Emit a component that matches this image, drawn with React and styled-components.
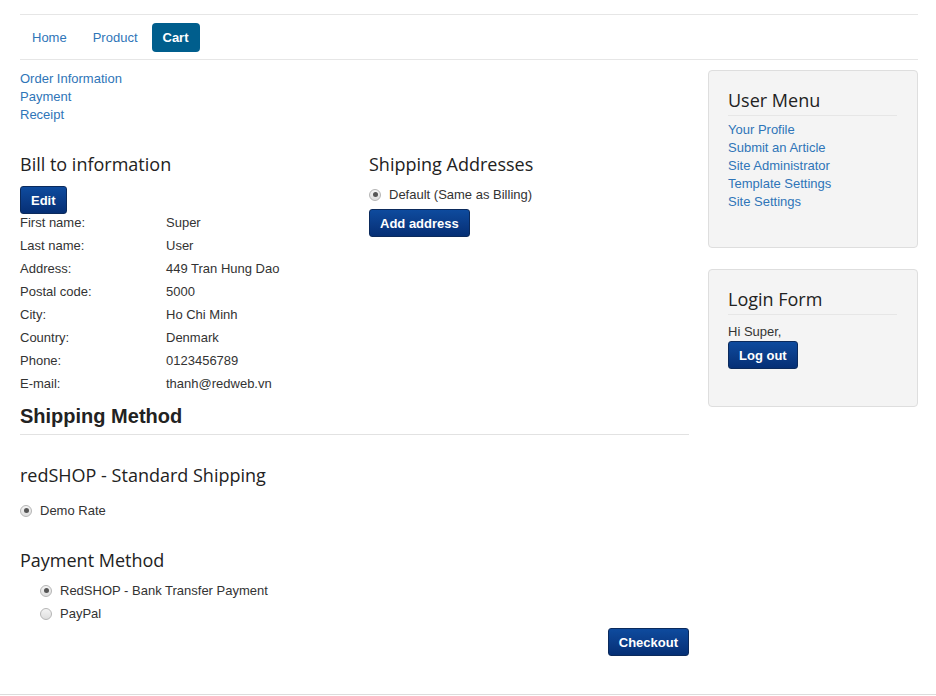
import React from "react";
import styled, { createGlobalStyle } from "styled-components";

const Global = createGlobalStyle`
  html, body { margin: 0; padding: 0; background: #fff; }
  body { font-family: "Liberation Sans", Arial, sans-serif; font-size: 13px; color: #333; line-height: 18px; }
  * { box-sizing: border-box; }
`;

const Page = styled.div`
  width: 936px;
  height: 695px;
  border-bottom: 1px solid #dcdcdc;
  padding: 14px 18px 0 20px;
`;

const Nav = styled.nav`
  display: flex;
  align-items: center;
  gap: 2px;
  height: 46px;
  border-top: 1px solid #e6e6e6;
  border-bottom: 1px solid #e6e6e6;
`;

const NavLink = styled.a`
  display: inline-block;
  padding: 0 ${p => (p.$active ? 11 : 12)}px;
  height: 29px;
  line-height: 29px;
  font-size: 13px;
  border-radius: 4px;
  color: ${p => (p.$active ? "#fff" : "#2f75b8")};
  background: ${p => (p.$active ? "#005e8d" : "transparent")};
  font-weight: ${p => (p.$active ? "bold" : "normal")};
  text-decoration: none;
`;

const Body = styled.div`
  display: grid;
  grid-template-columns: 669px 210px;
  column-gap: 19px;
  padding-top: 10px;
`;

const Main = styled.main`
  display: flex;
  flex-direction: column;
`;

const Steps = styled.div`
  display: flex;
  flex-direction: column;
`;

const Link = styled.a`
  color: #2f75b8;
  text-decoration: none;
  font-size: 13px;
  line-height: 18px;
`;

const Columns = styled.div`
  display: grid;
  grid-template-columns: 349px 1fr;
  margin-top: 29px;
`;

const H3 = styled.h3`
  font-family: "Open Sans", sans-serif;
  font-weight: 400;
  font-size: 18px;
  line-height: 22px;
  color: #222;
  margin: 0 0 ${p => p.$mb ?? 10}px;
`;

const Button = styled.button`
  font-family: "Liberation Sans", Arial, sans-serif;
  font-size: 13px;
  font-weight: bold;
  color: #fff;
  height: 28px;
  padding: 0 10px;
  border: 1px solid #0b2a5c;
  border-radius: 3px;
  background: linear-gradient(to bottom, #0e4b9e, #0a3a85 60%, #052f75);
  cursor: pointer;
  align-self: ${p => p.$align || "flex-start"};
  margin-top: ${p => p.$mt || 0}px;
`;

const InfoTable = styled.div`
  display: grid;
  grid-template-columns: 146px 1fr;
  grid-auto-rows: 23px;
  align-items: center;
  margin-top: -3px;
`;

const Cell = styled.span`
  font-size: 13px;
`;

const RadioRow = styled.label`
  display: flex;
  align-items: center;
  gap: 8px;
  height: 23px;
  padding-left: ${p => p.$indent || 0}px;
  font-size: 13px;
`;

const Radio = styled.span`
  width: 12px;
  height: 12px;
  border-radius: 50%;
  border: 1px solid #b5b5b5;
  background: linear-gradient(to bottom, #f4f4f4, #dedede);
  display: flex;
  align-items: center;
  justify-content: center;
  flex-shrink: 0;
  &::after {
    content: "";
    width: 5px;
    height: 5px;
    border-radius: 50%;
    background: ${p => (p.$checked ? "#555" : "transparent")};
  }
`;

const SectionTitle = styled.h2`
  font-family: "Liberation Sans", Arial, sans-serif;
  font-size: 20px;
  font-weight: bold;
  color: #222;
  margin: 9px 0 0;
  line-height: 24px;
  padding-bottom: 6px;
  border-bottom: 1px solid #e2e2e2;
`;

const Sidebar = styled.aside`
  display: flex;
  flex-direction: column;
  gap: 21px;
`;

const Well = styled.div`
  background: #f4f4f4;
  border: 1px solid #dedede;
  border-radius: 4px;
  padding: 18px 20px 20px 19px;
  display: flex;
  flex-direction: column;
  height: ${p => p.$h}px;
`;

const WellTitle = styled.h3`
  font-family: "Open Sans", sans-serif;
  font-weight: 400;
  font-size: 18px;
  line-height: 22px;
  color: #222;
  margin: 0 0 ${p => p.$mb ?? 5}px;
  padding-bottom: 4px;
  border-bottom: 1px solid #e6e6e6;
`;

const Text = styled.div`
  font-size: 13px;
  line-height: 18px;
`;

const bill = [
  ["First name:", "Super"],
  ["Last name:", "User"],
  ["Address:", "449 Tran Hung Dao"],
  ["Postal code:", "5000"],
  ["City:", "Ho Chi Minh"],
  ["Country:", "Denmark"],
  ["Phone:", "0123456789"],
  ["E-mail:", "thanh@redweb.vn"],
];

export default function App() {
  return (
    <>
      <Global />
      <Page>
        <Nav>
          <NavLink>Home</NavLink>
          <NavLink>Product</NavLink>
          <NavLink $active>Cart</NavLink>
        </Nav>
        <Body>
          <Main>
            <Steps>
              <Link>Order Information</Link>
              <Link>Payment</Link>
              <Link>Receipt</Link>
            </Steps>
            <Columns>
              <div>
                <H3 $mb={11}>Bill to information</H3>
                <Button>Edit</Button>
                <InfoTable>
                  {bill.map(([k, v]) => (
                    <React.Fragment key={k}>
                      <Cell>{k}</Cell>
                      <Cell>{v}</Cell>
                    </React.Fragment>
                  ))}
                </InfoTable>
              </div>
              <div>
                <H3 $mb={8}>Shipping Addresses</H3>
                <RadioRow>
                  <Radio $checked />
                  Default (Same as Billing)
                </RadioRow>
                <Button $mt={3}>Add address</Button>
              </div>
            </Columns>
            <SectionTitle>Shipping Method</SectionTitle>
            <H3 style={{ marginTop: 29, marginBottom: 13 }}>redSHOP - Standard Shipping</H3>
            <RadioRow>
              <Radio $checked />
              Demo Rate
            </RadioRow>
            <H3 style={{ marginTop: 27, marginBottom: 8 }}>Payment Method</H3>
            <RadioRow $indent={20}>
              <Radio $checked />
              RedSHOP - Bank Transfer Payment
            </RadioRow>
            <RadioRow $indent={20}>
              <Radio />
              PayPal
            </RadioRow>
            <Button $align="flex-end" $mt={3}>Checkout</Button>
          </Main>
          <Sidebar>
            <Well $h={178}>
              <WellTitle>User Menu</WellTitle>
              <Link>Your Profile</Link>
              <Link>Submit an Article</Link>
              <Link>Site Administrator</Link>
              <Link>Template Settings</Link>
              <Link>Site Settings</Link>
            </Well>
            <Well $h={138}>
              <WellTitle $mb={8}>Login Form</WellTitle>
              <Text>Hi Super,</Text>
              <Button>Log out</Button>
            </Well>
          </Sidebar>
        </Body>
      </Page>
    </>
  );
}
